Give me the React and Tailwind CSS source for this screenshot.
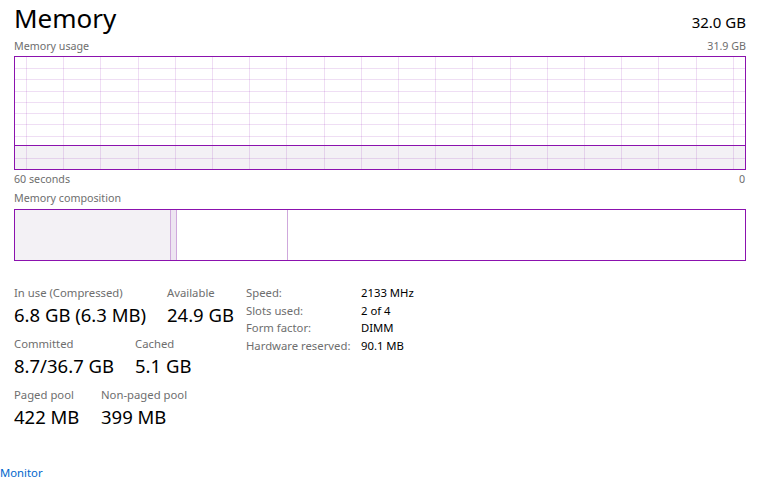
const P = '#8b12ae';

function UsageGraph() {
  const w = 730;
  const h = 112;
  const vx = [];
  for (let x = 11; x < w; x += 37.2) vx.push(Math.round(x));
  const hy = [11, 22, 34, 45, 56, 67, 79, 101];
  return (
    <div className="w-full h-[114px] border border-[#8b12ae] bg-white">
      <svg width={w} height={h} viewBox={`0 0 ${w} ${h}`} shapeRendering="crispEdges" className="block">
        <rect x="0" y="88" width={w} height={h - 88} fill="#f3f1f5" />
        {vx.map((x) => (
          <line key={'v' + x} x1={x + 0.5} y1="0" x2={x + 0.5} y2={h} stroke={P} strokeOpacity="0.14" />
        ))}
        {hy.map((y) => (
          <line key={'h' + y} x1="0" y1={y + 0.5} x2={w} y2={y + 0.5} stroke={P} strokeOpacity="0.14" />
        ))}
        <line x1="0" y1="88.5" x2={w} y2="88.5" stroke={P} />
      </svg>
    </div>
  );
}

function Composition() {
  return (
    <div className="w-full h-[52px] border border-[#8b12ae] flex">
      <div className="w-[156px] h-full bg-[#f3f1f5] border-r border-[#cfa8dc]" />
      <div className="w-[6px] h-full bg-[#ede5f1] border-r border-[#cfa8dc]" />
      <div className="w-[111px] h-full bg-white border-r border-[#cfa8dc]" />
      <div className="flex-1 h-full bg-white" />
    </div>
  );
}

function Stat({ label, value, w }) {
  return (
    <div className={`flex flex-col ${w}`}>
      <div className="text-[11.3px] leading-[16px] text-[#6e6e6e]">{label}</div>
      <div className="text-[18.5px] leading-[27px] text-black">{value}</div>
    </div>
  );
}

export default function App() {
  const font = { fontFamily: '"Noto Sans", "Open Sans", sans-serif' };
  return (
    <div className="w-[763px] h-[485px] bg-white overflow-hidden relative" style={font}>
      <div className="pl-[14px] pr-[17px]">
        <div className="flex justify-between items-baseline h-[38px]">
          <div className="text-[26px] leading-[36px] text-black">Memory</div>
          <div className="text-[15px] leading-[20px] text-black">32.0 GB</div>
        </div>
        <div className="flex justify-between h-[18px] text-[10.7px] leading-[16px] text-[#6e6e6e]">
          <span>Memory usage</span>
          <span>31.9 GB</span>
        </div>
        <UsageGraph />
        <div className="flex justify-between h-[20px] text-[10.7px] leading-[18px] text-[#6e6e6e] pr-[1px]">
          <span>60 seconds</span>
          <span>0</span>
        </div>
        <div className="h-[19px] text-[10.7px] leading-[16px] text-[#6e6e6e]">Memory composition</div>
        <Composition />

        <div className="flex items-start mt-[24px]">
          <div className="flex flex-col w-[232px] gap-[8px]">
            <div className="flex">
              <Stat w="w-[153px]" label="In use (Compressed)" value="6.8 GB (6.3 MB)" />
              <Stat w="" label="Available" value="24.9 GB" />
            </div>
            <div className="flex">
              <Stat w="w-[121px]" label="Committed" value="8.7/36.7 GB" />
              <Stat w="" label="Cached" value="5.1 GB" />
            </div>
            <div className="flex">
              <Stat w="w-[87px]" label="Paged pool" value="422 MB" />
              <Stat w="" label="Non-paged pool" value="399 MB" />
            </div>
          </div>
          <div className="grid grid-cols-[115px_auto] content-start -mt-[1px] text-[11.3px] leading-[17.7px]">
            <span className="text-[#6e6e6e]">Speed:</span>
            <span className="text-black">2133 MHz</span>
            <span className="text-[#6e6e6e]">Slots used:</span>
            <span className="text-black">2 of 4</span>
            <span className="text-[#6e6e6e]">Form factor:</span>
            <span className="text-black">DIMM</span>
            <span className="text-[#6e6e6e]">Hardware reserved:</span>
            <span className="text-black">90.1 MB</span>
          </div>
        </div>
      </div>
      <div className="absolute left-0 top-[464px] text-[11.3px] leading-[18px] text-[#0066cc]">Monitor</div>
    </div>
  );
}
